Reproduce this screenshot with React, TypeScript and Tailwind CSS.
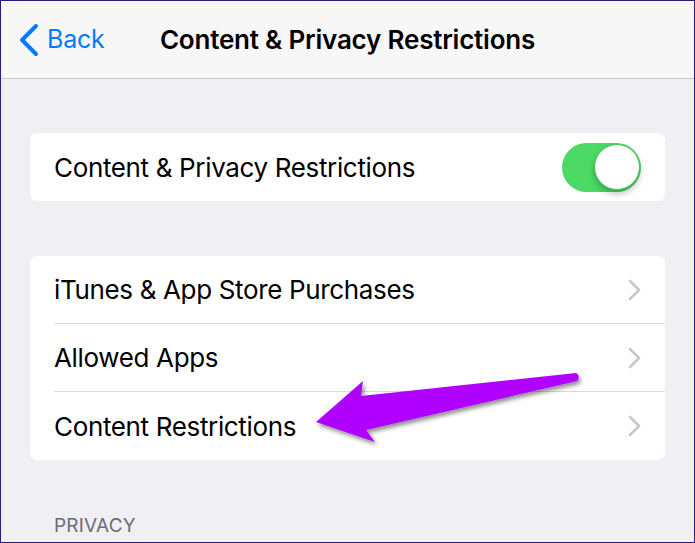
import type { ReactElement } from "react"

interface RowItem {
  label: string
}

const rows: RowItem[] = [
  { label: "iTunes & App Store Purchases" },
  { label: "Allowed Apps" },
  { label: "Content Restrictions" },
]

function Chevron(): ReactElement {
  return (
    <svg width="14" height="22" viewBox="0 0 14 22" className="shrink-0">
      <path d="M2 2 L11 11 L2 20" fill="none" stroke="#c7c7cc" strokeWidth="2.6" strokeLinecap="round" strokeLinejoin="round" />
    </svg>
  )
}

function Toggle(): ReactElement {
  return (
    <div className="relative w-[79px] h-[49px] rounded-full bg-[#4cd964]">
      <div className="absolute right-[1px] top-[1px] w-[46px] h-[46px] rounded-full bg-white border border-[#3fc556] shadow-[0_4px_6px_rgba(0,0,0,0.25)]" />
    </div>
  )
}

export default function App() {
  return (
    <div
      className="relative w-[695px] h-[543px] overflow-hidden border border-[#2f1a7a] bg-[#efeff4] flex flex-col"
      style={{ fontFamily: "Inter, 'Noto Sans', sans-serif" }}
    >
      {/* nav bar */}
      <div className="relative h-[78px] shrink-0 bg-[#f7f7f8] border-b border-[#c8c7cc] flex items-center">
        <div className="flex items-center pl-[18px] text-[#007aff] mt-[1px]">
          <svg width="22" height="34" viewBox="0 0 22 34">
            <path d="M17 3 L3 17 L17 31" fill="none" stroke="#007aff" strokeWidth="4" strokeLinecap="round" strokeLinejoin="round" />
          </svg>
          <span className="ml-[6px] text-[25px] tracking-[-0.2px]">Back</span>
        </div>
        <div className="absolute inset-0 flex items-center justify-center pointer-events-none">
          <span className="text-[26px] font-semibold text-black tracking-[-0.2px]">Content &amp; Privacy Restrictions</span>
        </div>
      </div>

      <div className="flex flex-col px-[29px]">
        {/* first card */}
        <div className="mt-[54px] h-[68px] bg-white rounded-[7px] flex items-center justify-between pl-[24px] pr-[24px]">
          <span className="text-[26px] text-black tracking-[-0.35px]">Content &amp; Privacy Restrictions</span>
          <Toggle />
        </div>

        {/* second card */}
        <div className="mt-[55px] bg-white rounded-[7px] flex flex-col">
          {rows.map((row, index) => (
            <div key={index} className="h-[68px] pl-[24px] flex">
              <div
                className={
                  "flex-1 flex items-center justify-between pr-[23px] " +
                  (index < rows.length - 1 ? "border-b border-[#d9d9dc]" : "")
                }
              >
                <span className="text-[26px] text-black tracking-[-0.35px]">{row.label}</span>
                <Chevron />
              </div>
            </div>
          ))}
        </div>

        <div className="mt-[52px] pl-[24px] text-[19px] text-[#6d6d72] tracking-[0.2px]">PRIVACY</div>
      </div>

      {/* annotation arrow */}
      <svg className="absolute left-0 top-0 pointer-events-none" width="695" height="543" viewBox="0 0 695 543">
        <defs>
          <filter id="sh" x="-20%" y="-20%" width="140%" height="160%">
            <feDropShadow dx="2" dy="3" stdDeviation="2" floodColor="#000" floodOpacity="0.45" />
          </filter>
        </defs>
        <path
          d="M315 421 L362 380 L360 395 L575 372 Q580 375 576 380 L365 429 L374 441 Z"
          fill="#b000ff"
          filter="url(#sh)"
        />
      </svg>
    </div>
  )
}
